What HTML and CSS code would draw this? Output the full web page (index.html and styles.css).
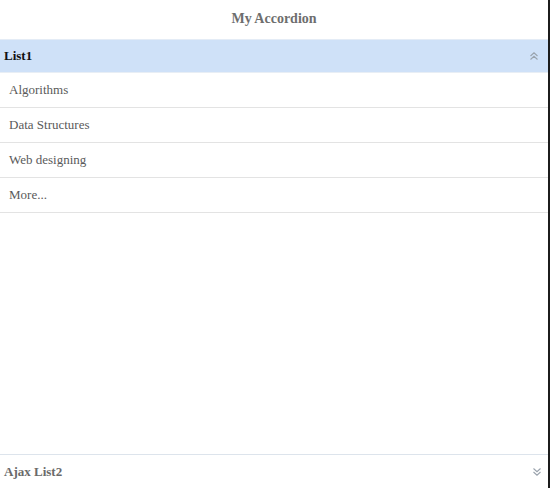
FILE: index.html
```html
<!DOCTYPE html>
<html>
<head>
<meta charset="utf-8">
<link rel="stylesheet" href="styles.css">
</head>
<body>
<div class="page">
  <div class="title">My Accordion</div>
  <div class="section-head open">
    <span class="head-label">List1</span>
    <svg class="chev" width="10" height="10" viewBox="0 0 10 10"><path d="M1.5 5 L5 1.8 L8.5 5 M1.5 8.5 L5 5.3 L8.5 8.5" fill="none" stroke="#9aa3ad" stroke-width="1.1"/></svg>
  </div>
  <ul class="items">
    <li>Algorithms</li>
    <li>Data Structures</li>
    <li>Web designing</li>
    <li>More...</li>
  </ul>
  <div class="spacer"></div>
  <div class="section-head closed">
    <span class="head-label">Ajax List2</span>
    <svg class="chev" width="10" height="10" viewBox="0 0 10 10"><path d="M1.5 1.5 L5 4.7 L8.5 1.5 M1.5 5 L5 8.2 L8.5 5" fill="none" stroke="#9aa3ad" stroke-width="1.1"/></svg>
  </div>
</div>
</body>
</html>
```
FILE: styles.css
```css
html, body {
  margin: 0;
  padding: 0;
  background: #fff;
}
.page {
  width: 548px;
  height: 488px;
  border-right: 2px solid #1c1c1c;
  display: flex;
  flex-direction: column;
  font-family: "Liberation Serif", "Times New Roman", serif;
  font-size: 13px;
  overflow: hidden;
}
.title {
  height: 39px;
  line-height: 38px;
  text-align: center;
  font-weight: bold;
  font-size: 14px;
  color: #6e6e6e;
}
.section-head {
  display: flex;
  align-items: center;
  justify-content: space-between;
  padding: 0 9px 0 4px;
  height: 32px;
  font-weight: bold;
}
.section-head.open {
  background: #cfe1f8;
  color: #111;
  border-top: 1px solid #e4ecf6;
  border-bottom: 1px solid #e8eef5;
}
.section-head.closed {
  color: #6a6a6a;
  border-top: 1px solid #dde4ec;
  height: 33px;
  padding-right: 6px;
}
.chev {
  display: block;
}
.items {
  list-style: none;
  margin: 0;
  padding: 0;
}
.items li {
  height: 34px;
  line-height: 33px;
  padding-left: 9px;
  color: #5a5a5a;
  border-bottom: 1px solid #e3e3e3;
}
.spacer {
  flex: 1;
}
```
